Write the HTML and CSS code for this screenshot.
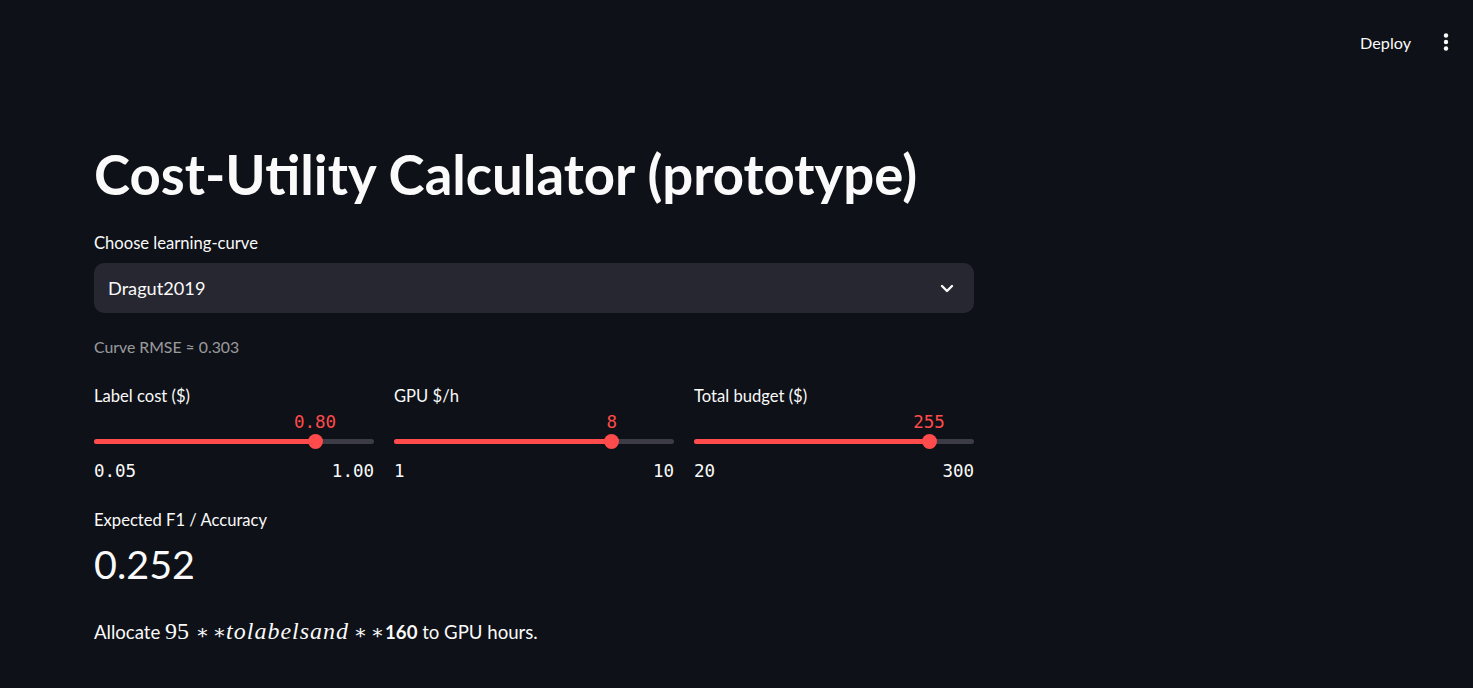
FILE: index.html
```html
<!DOCTYPE html>
<html lang="en">
<head>
<meta charset="utf-8">
<title>Cost-Utility Calculator</title>
<link rel="stylesheet" href="styles.css">
</head>
<body>
<header class="topbar">
  <button class="deploy">Deploy</button>
  <button class="kebab" aria-label="Main menu">
    <svg width="6" height="20" viewBox="0 0 6 20"><circle cx="3" cy="3.5" r="2.2" fill="#fafafa"/><circle cx="3" cy="10" r="2.2" fill="#fafafa"/><circle cx="3" cy="16.5" r="2.2" fill="#fafafa"/></svg>
  </button>
</header>
<main class="main">
  <h1 class="title">Cost-Utility Calculator (prototype)</h1>

  <label class="widget-label">Choose learning-curve</label>
  <div class="select">
    <span class="select-value">Dragut2019</span>
    <svg class="chevron" width="14" height="9" viewBox="0 0 14 9"><path d="M2 2 L7 7 L12 2" fill="none" stroke="#fafafa" stroke-width="2.4" stroke-linecap="round" stroke-linejoin="round"/></svg>
  </div>

  <p class="caption">Curve RMSE ≈ 0.303</p>

  <div class="sliders">
    <div class="slider-col">
      <div class="widget-label">Label cost ($)</div>
      <div class="slider">
        <div class="track"><div class="fill" style="width:78.95%"></div></div>
        <div class="thumb" style="left:78.95%"><span class="thumb-value">0.80</span></div>
      </div>
      <div class="ticks"><span>0.05</span><span>1.00</span></div>
    </div>
    <div class="slider-col">
      <div class="widget-label">GPU $/h</div>
      <div class="slider">
        <div class="track"><div class="fill" style="width:77.78%"></div></div>
        <div class="thumb" style="left:77.78%"><span class="thumb-value">8</span></div>
      </div>
      <div class="ticks"><span>1</span><span>10</span></div>
    </div>
    <div class="slider-col">
      <div class="widget-label">Total budget ($)</div>
      <div class="slider">
        <div class="track"><div class="fill" style="width:83.93%"></div></div>
        <div class="thumb" style="left:83.93%"><span class="thumb-value">255</span></div>
      </div>
      <div class="ticks"><span>20</span><span>300</span></div>
    </div>
  </div>

  <div class="metric">
    <div class="widget-label">Expected F1 / Accuracy</div>
    <div class="metric-value">0.252</div>
  </div>

  <p class="body-text">Allocate <span class="math"><span class="mn">95</span><span class="ast ast-bin">∗</span><span class="ast ast-ord">∗</span><span class="mi">tolabelsand</span><span class="ast ast-bin2">∗</span><span class="ast ast-ord2">∗</span></span><strong>160</strong> to GPU hours.</p>
</main>
</body>
</html>
```

FILE: styles.css
```css
* { box-sizing: border-box; }

html, body {
  margin: 0;
  padding: 0;
  background: #0e1117;
  color: #fafafa;
  font-family: "Lato", "Open Sans", sans-serif;
}

.topbar {
  height: 84px;
  display: flex;
  align-items: center;
  justify-content: flex-end;
  padding-right: 20px;
  gap: 28px;
}

.deploy {
  background: none;
  border: none;
  color: #fafafa;
  font-family: inherit;
  font-size: 16.2px;
  padding: 0;
  cursor: pointer;
}

.kebab {
  background: none;
  border: none;
  padding: 0;
  width: 14px;
  display: flex;
  justify-content: center;
  cursor: pointer;
}

.main {
  width: 880px;
  margin-left: 94px;
}

.title {
  margin: 57px 0 22px;
  font-size: 54.5px;
  font-weight: 700;
  line-height: 66px;
}

.widget-label {
  display: block;
  font-size: 16.6px;
  line-height: 28px;
}

.select {
  margin-top: 6px;
  height: 50px;
  background: #262730;
  border-radius: 10px;
  display: flex;
  align-items: center;
  justify-content: space-between;
  padding: 0 20px 0 14px;
}

.select-value {
  font-size: 18.2px;
}

.caption {
  margin: 20px 0 0;
  font-size: 15.8px;
  line-height: 28px;
  color: rgba(250, 250, 250, 0.6);
}

.sliders {
  margin-top: 21px;
  display: grid;
  grid-template-columns: repeat(3, 1fr);
  gap: 20px;
}

.slider {
  position: relative;
  height: 48px;
}

.track {
  position: absolute;
  left: 0;
  right: 0;
  top: 28.5px;
  height: 5px;
  border-radius: 3px;
  background: #3b3c45;
}

.fill {
  height: 100%;
  border-radius: 3px;
  background: #ff4b4b;
}

.thumb {
  position: absolute;
  top: 23.5px;
  width: 15px;
  height: 15px;
  margin-left: -7.5px;
  border-radius: 50%;
  background: #ff4b4b;
}

.thumb-value {
  position: absolute;
  left: 50%;
  bottom: 15px;
  transform: translateX(-50%);
  font-family: "DejaVu Sans Mono", monospace;
  font-size: 17.5px;
  line-height: 24px;
  color: #ff4b4b;
  white-space: nowrap;
}

.ticks {
  display: flex;
  justify-content: space-between;
  font-family: "DejaVu Sans Mono", monospace;
  font-size: 17.5px;
  line-height: 24px;
  margin-top: 1px;
}

.metric {
  margin-top: 23px;
}

.metric-value {
  margin-top: 3px;
  font-size: 39.5px;
  line-height: 54px;
  font-weight: 400;
}

.body-text {
  margin: 25px 0 0;
  font-size: 18.6px;
  line-height: 30px;
}

.math {
  font-family: "Liberation Serif", "DejaVu Serif", serif;
  font-size: 24px;
}

.mi {
  font-style: italic;
  letter-spacing: 1px;
}

.ast {
  display: inline-flex;
  justify-content: center;
  width: 17px;
  font-size: 20px;
}

.ast-bin {
  margin-left: 5px;
}

.ast-ord {
  margin-right: -2px;
}

.ast-bin2 {
  margin-left: 3px;
}

.ast-ord2 {
  margin-right: -1px;
}

strong {
  font-weight: 700;
}
```
